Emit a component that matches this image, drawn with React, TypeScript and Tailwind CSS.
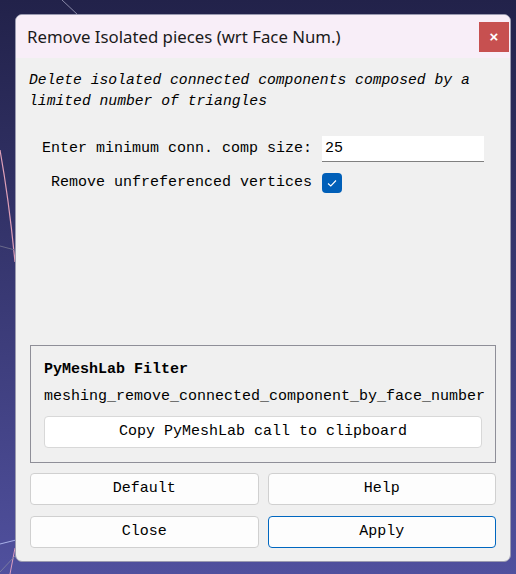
import React, { useState } from 'react';

const mono = { fontFamily: '"Liberation Mono", "DejaVu Sans Mono", monospace' };

const Backdrop: React.FC = () => (
  <svg className="absolute inset-0 h-full w-full" viewBox="0 0 516 574" preserveAspectRatio="none">
    <line x1="62" y1="0" x2="78" y2="15" stroke="#8a8aa8" strokeWidth="1" />
    <path d="M0 150 Q 9 200 15 262" stroke="#e0a0b8" strokeWidth="1.2" fill="none" />
    <line x1="0" y1="246" x2="15" y2="250" stroke="#6a6a8a" strokeWidth="1" />
    <line x1="0" y1="544" x2="16" y2="540" stroke="#a8b0e8" strokeWidth="1" />
    <line x1="15" y1="548" x2="10" y2="574" stroke="#e0a0c0" strokeWidth="1" />
    <line x1="15" y1="556" x2="0" y2="572" stroke="#7a7aa0" strokeWidth="1" />
  </svg>
);

const DialogButton: React.FC<{ label: string; primary?: boolean }> = ({ label, primary }) => (
  <button
    className={`h-[32px] rounded-[4px] border bg-[#fdfdfd] text-[15px] text-black ${
      primary ? 'border-[#0067c0]' : 'border-[#d0d0d0]'
    }`}
    style={mono}
  >
    {label}
  </button>
);

export default function App() {
  const [minSize, setMinSize] = useState('25');
  const [removeUnref, setRemoveUnref] = useState(true);

  return (
    <div className="relative h-[574px] w-[516px] overflow-hidden bg-gradient-to-b from-[#22224a] to-[#50509e]">
      <Backdrop />
      <div className="relative ml-[15px] mt-[14px] flex h-[548px] w-[496px] flex-col overflow-hidden rounded-[7px] border border-[#9a9ab0] bg-[#f0f0f0]">
        <div className="flex h-[43px] shrink-0 items-center justify-between bg-[#f8eef8] pl-[11px]">
          <span className="text-[16.8px] text-[#1a1a1a]" style={{ fontFamily: '"Noto Sans", "Open Sans", sans-serif' }}>
            Remove Isolated pieces (wrt Face Num.)
          </span>
          <button className="mr-[1px] mt-[1px] flex h-[30px] w-[30px] items-center justify-center bg-[#c75050] text-[15px] font-bold text-white" style={{ fontFamily: '"Liberation Sans", sans-serif' }}>
            ×
          </button>
        </div>

        <div className="flex flex-1 flex-col">
          <p className="px-[13px] pt-[12px] text-[14.7px] italic leading-[21px] text-black" style={mono}>
            Delete isolated connected components composed by a limited number of triangles
          </p>

          <div className="mt-[24px] grid grid-cols-[auto_1fr] items-center gap-x-[10px] gap-y-[10px] pl-[26px] pr-[26px]">
            <label className="text-right text-[15px] text-black" style={mono}>
              Enter minimum conn. comp size:
            </label>
            <input
              value={minSize}
              onChange={(e) => setMinSize(e.target.value)}
              className="h-[26px] w-full border-b border-[#808080] bg-white px-[3px] text-[15px] text-black outline-none"
              style={mono}
            />
            <label className="text-right text-[15px] text-black" style={mono}>
              Remove unfreferenced vertices
            </label>
            <div className="flex">
              <button
                onClick={() => setRemoveUnref((v) => !v)}
                className="flex h-[20px] w-[20px] items-center justify-center rounded-[4px] bg-[#005fb8]"
              >
                {removeUnref && (
                  <svg width="12" height="12" viewBox="0 0 12 12">
                    <path d="M2 6.5 L4.8 9 L10 3.5" stroke="white" strokeWidth="1.1" fill="none" />
                  </svg>
                )}
              </button>
            </div>
          </div>

          <div className="flex-1" />

          <div className="mx-[14px] border border-[#8f8f98] px-[13px] pb-[14px] pt-[13px]">
            <div className="text-[15px] font-bold leading-[22px] text-black" style={mono}>
              PyMeshLab Filter
            </div>
            <div className="mt-[5px] text-[15px] leading-[22px] text-black" style={mono}>
              meshing_remove_connected_component_by_face_number
            </div>
            <button
              className="mt-[8px] h-[32px] w-full rounded-[4px] border border-[#d8d8d8] bg-white text-[15px] text-black"
              style={mono}
            >
              Copy PyMeshLab call to clipboard
            </button>
          </div>

          <div className="mx-[14px] mb-[13px] mt-[10px] grid grid-cols-2 gap-x-[9px] gap-y-[11px]">
            <DialogButton label="Default" />
            <DialogButton label="Help" />
            <DialogButton label="Close" />
            <DialogButton label="Apply" primary />
          </div>
        </div>
      </div>
    </div>
  );
}
